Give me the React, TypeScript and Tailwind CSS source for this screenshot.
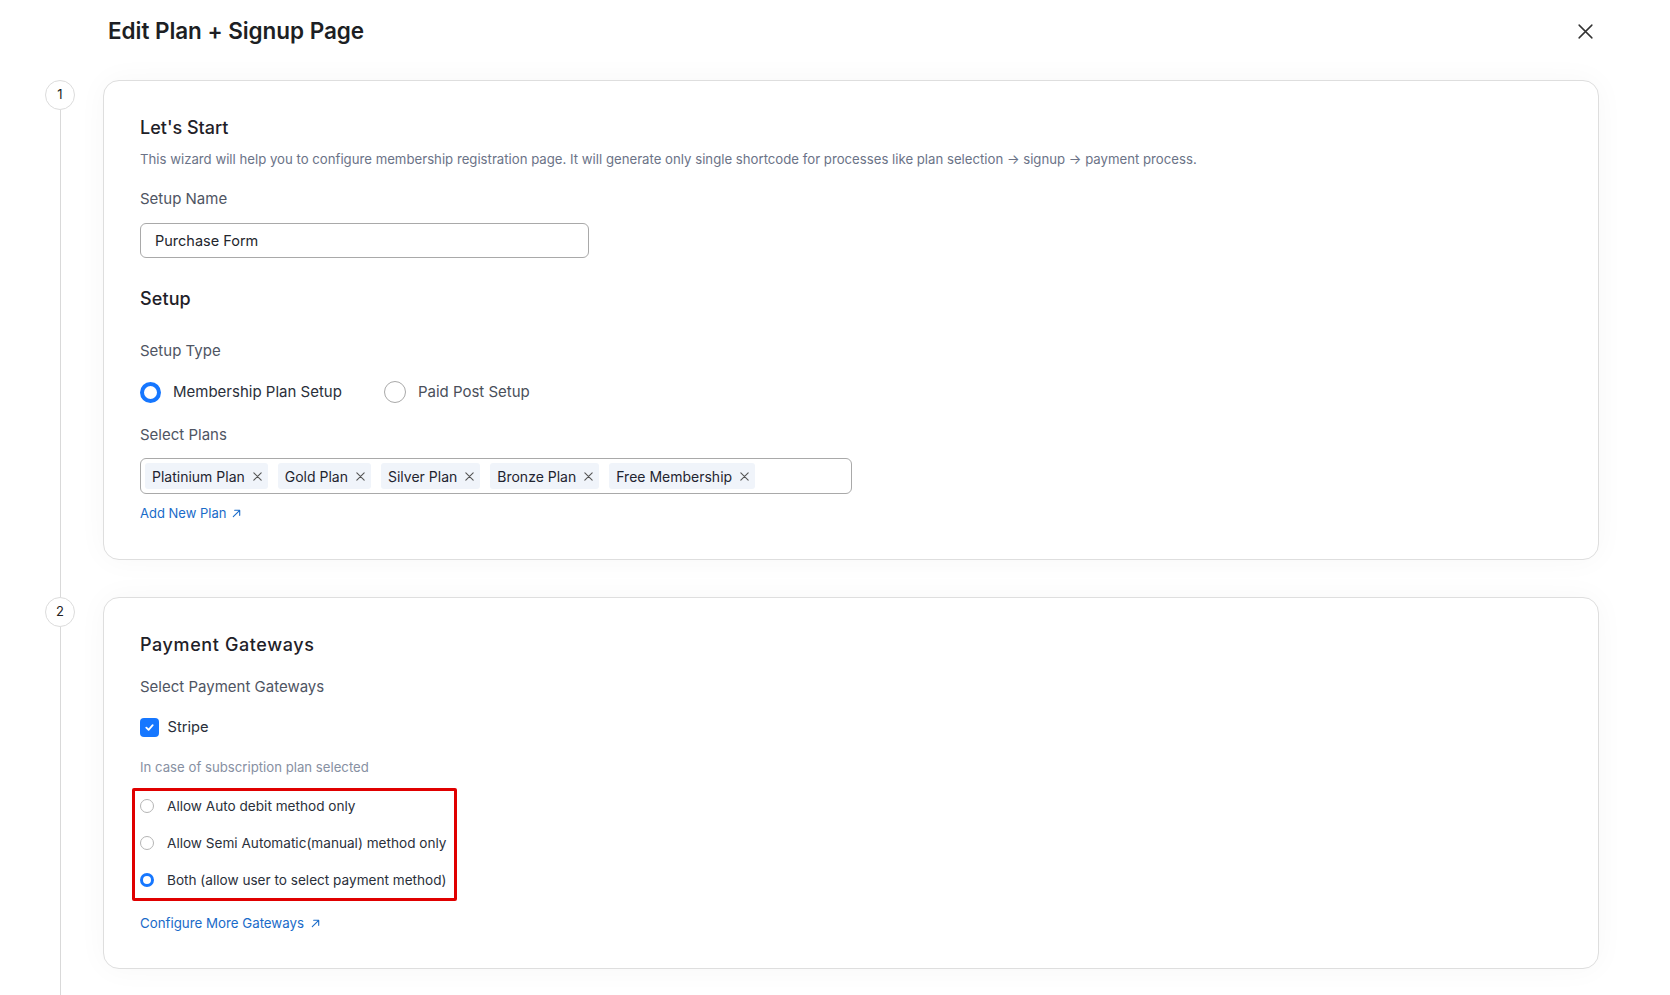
import React from "react";

const font = { fontFamily: "Inter, 'Noto Sans', sans-serif" };

function XIcon({ size = 12, className = "" }: { size?: number; className?: string }) {
  return (
    <svg width={size} height={size} viewBox="0 0 12 12" className={className} fill="none" stroke="currentColor" strokeWidth="1.2" strokeLinecap="round">
      <path d="M2 2L10 10M10 2L2 10" />
    </svg>
  );
}

function ArrowUR({ size = 11 }: { size?: number }) {
  return (
    <svg width={size} height={size} viewBox="0 0 12 12" fill="none" stroke="currentColor" strokeWidth="1.2" strokeLinecap="round" strokeLinejoin="round">
      <path d="M2.5 9.5L9.5 2.5M4 2.5h5.5V8" />
    </svg>
  );
}

function Tag({ label }: { label: string }) {
  return (
    <div className="flex items-center h-[26px] bg-[#f0f4fa] rounded-[3px] pl-[7px] pr-[5px] gap-[7px] text-[14px] text-[#1f2430]">
      <span>{label}</span>
      <XIcon size={11} className="text-[#555]" />
    </div>
  );
}

function SmallRadio({ checked, label }: { checked?: boolean; label: string }) {
  return (
    <div className="flex items-center h-[24px] gap-[13px]">
      {checked ? (
        <div className="w-[14px] h-[14px] rounded-full border-[3px] border-[#1677ff] bg-white" />
      ) : (
        <div className="w-[14px] h-[14px] rounded-full border border-[#b5b5b5] bg-white" />
      )}
      <span className="text-[13.6px] text-[#2a2f3a]">{label}</span>
    </div>
  );
}

export default function App() {
  const tags = ["Platinium Plan", "Gold Plan", "Silver Plan", "Bronze Plan", "Free Membership"];
  return (
    <div className="w-full h-[995px] bg-white overflow-hidden" style={font}>
      {/* header */}
      <div className="flex items-center justify-between h-[62px] pl-[108px] pr-[76px]">
        <h1 className="text-[22.5px] font-semibold text-[#1d1f24] tracking-[-0.05px]">Edit Plan + Signup Page</h1>
        <svg width="17" height="17" viewBox="0 0 16 16" fill="none" stroke="#333" strokeWidth="1.4" strokeLinecap="round">
          <path d="M2 2L14 14M14 2L2 14" />
        </svg>
      </div>

      <div className="pl-[45px] pr-[71px] pt-[18px]">
        {/* Step 1 */}
        <div className="flex">
          <div className="flex flex-col items-center w-[30px] mr-[28px]">
            <div className="w-[30px] h-[30px] rounded-full border border-[#dcdcdc] bg-white flex items-center justify-center text-[13px] text-[#222]">1</div>
            <div className="flex-1 w-px bg-[#d9d9d9]" />
          </div>
          <div className="flex-1 pb-[37px]">
            <div className="h-[480px] rounded-[16px] border border-[#dedede] bg-white shadow-[0_0_30px_rgba(0,0,0,0.035)] px-[36px] pt-[33px]">
              <h2 className="text-[18px] font-medium text-[#1f2128] leading-[28px]">Let's Start</h2>
              <p className="text-[13.2px] text-[#6b7387] leading-[20px] mt-[7px]">
                This wizard will help you to configure membership registration page. It will generate only single shortcode for processes like plan selection → signup → payment process.
              </p>
              <div className="text-[15px] text-[#4f5563] leading-[20px] mt-[20px]">Setup Name</div>
              <div className="mt-[14px] w-[449px] h-[35px] border border-[#a9a9a9] rounded-[6px] flex items-center pl-[14px] text-[14.5px] text-[#23262d]">
                Purchase Form
              </div>
              <h2 className="text-[18px] font-medium text-[#1f2128] leading-[28px] mt-[27px] tracking-[0.1px]">Setup</h2>
              <div className="text-[15px] text-[#4f5563] leading-[20px] mt-[28px]">Setup Type</div>
              <div className="flex items-center mt-[20px] h-[22px]">
                <div className="w-[21px] h-[21px] rounded-full border-[4px] border-[#1677ff] bg-white" />
                <span className="ml-[12px] text-[15px] text-[#2a2f3a]">Membership Plan Setup</span>
                <div className="ml-[42px] w-[22px] h-[22px] rounded-full border border-[#a9a9a9] bg-white" />
                <span className="ml-[12px] text-[15px] text-[#4a4f5a]">Paid Post Setup</span>
              </div>
              <div className="text-[15px] text-[#4f5563] leading-[20px] mt-[22px]">Select Plans</div>
              <div className="mt-[13px] w-[712px] h-[36px] border border-[#a9a9a9] rounded-[6px] flex items-center pl-[4px] gap-[10px]">
                {tags.map((t) => (
                  <Tag key={t} label={t} />
                ))}
              </div>
              <a className="mt-[10px] flex items-center gap-[5px] text-[13px] text-[#1a6bc9] leading-[18px]">
                Add New Plan <ArrowUR size={11} />
              </a>
            </div>
          </div>
        </div>

        {/* Step 2 */}
        <div className="flex">
          <div className="flex flex-col items-center w-[30px] mr-[28px]">
            <div className="w-[30px] h-[30px] rounded-full border border-[#dcdcdc] bg-white flex items-center justify-center text-[13px] text-[#222]">2</div>
            <div className="flex-1 w-px bg-[#d9d9d9]" />
          </div>
          <div className="flex-1 pb-[40px]">
            <div className="h-[372px] rounded-[16px] border border-[#dedede] bg-white shadow-[0_0_30px_rgba(0,0,0,0.035)] px-[36px] pt-[33px]">
              <h2 className="text-[18px] font-medium text-[#1f2128] leading-[28px] tracking-[0.6px]">Payment Gateways</h2>
              <div className="text-[15px] text-[#4f5563] leading-[20px] mt-[18px]">Select Payment Gateways</div>
              <div className="flex items-center mt-[20px] h-[20px]">
                <div className="ml-[-0.5px] w-[19px] h-[19px] rounded-[4px] bg-[#1677ff] flex items-center justify-center">
                  <svg width="11" height="11" viewBox="0 0 12 12" fill="none" stroke="white" strokeWidth="2" strokeLinecap="round" strokeLinejoin="round">
                    <path d="M2.5 6.2L5 8.5L9.5 3.5" />
                  </svg>
                </div>
                <span className="ml-[9px] text-[14.7px] text-[#2a2f3a]">Stripe</span>
              </div>
              <div className="text-[13.2px] text-[#8790a2] leading-[20px] mt-[20px]">In case of subscription plan selected</div>
              <div className="mt-[11px] ml-[-8px] w-fit border-[3px] border-[#e00000] rounded-[2px] pl-[5px] pr-[7px] pt-[3px] pb-[6px] flex flex-col gap-[13px]">
                <SmallRadio label="Allow Auto debit method only" />
                <SmallRadio label="Allow Semi Automatic(manual) method only" />
                <SmallRadio checked label="Both (allow user to select payment method)" />
              </div>
              <a className="mt-[13px] flex items-center gap-[6px] text-[13.3px] text-[#1a6bc9] leading-[18px]">
                Configure More Gateways <ArrowUR size={11} />
              </a>
            </div>
          </div>
        </div>
      </div>
    </div>
  );
}
